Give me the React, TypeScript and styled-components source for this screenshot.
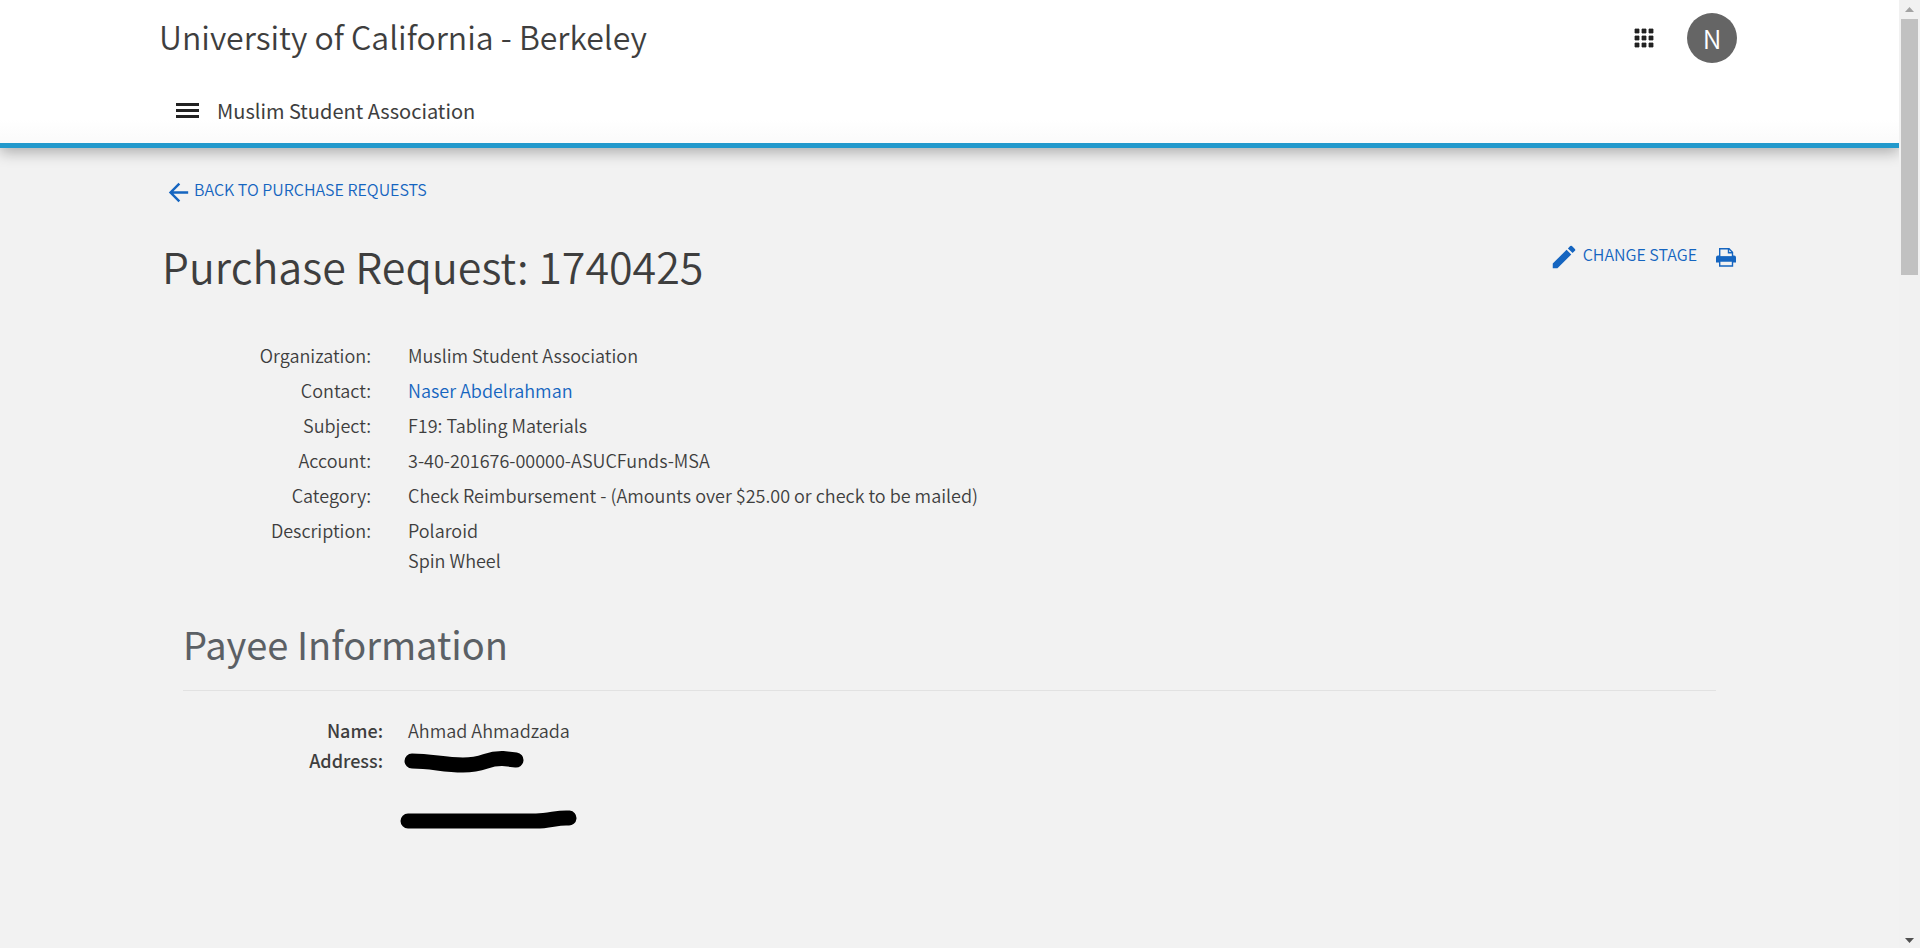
import React from "react";
import styled, { createGlobalStyle } from "styled-components";

const GlobalStyle = createGlobalStyle`
  *, *::before, *::after { box-sizing: border-box; }
  body {
    margin: 0;
    background: #f2f2f2;
    color: #3e3e3e;
    font-family: "Noto Sans CJK SC", "Open Sans", sans-serif;
    font-size: 18px;
    font-weight: 350;
    line-height: 30px;
  }
  a { color: #1565c0; text-decoration: none; }
`;

const Shell = styled.div`
  display: grid;
  grid-template-columns: minmax(0, 1fr) 21px;
  min-height: 100vh;
`;

const Page = styled.div`
  overflow: hidden;
`;

const Header = styled.header`
  padding: 13px 159px 12px;
  background: linear-gradient(#fff 120px, #fafafa 143px);
  border-bottom: 5px solid #2299cc;
  box-shadow: 0 4px 14px rgba(0, 0, 0, 0.3);
`;

const Brand = styled.div`
  display: flex;
  justify-content: space-between;
  height: 50px;
  padding-right: 3px;
`;

const School = styled.div`
  font-size: 32px;
  line-height: 46px;
`;

const Tools = styled.div`
  display: flex;
  align-items: center;
  gap: 28px;
`;

const IconButton = styled.button`
  display: flex;
  padding: 0;
  border: 0;
  background: none;
  color: #222;
  cursor: pointer;
`;

const Avatar = styled.button`
  width: 50px;
  height: 50px;
  padding: 0;
  border: 0;
  border-radius: 50%;
  background: #656565;
  color: #fff;
  font: inherit;
  font-size: 26px;
  line-height: 48px;
`;

const OrgBar = styled.nav`
  display: flex;
  align-items: center;
  gap: 14px;
  height: 40px;
  margin-top: 28px;
  padding-left: 14px;
`;

const OrgName = styled.div`
  font-size: 20px;
  font-weight: 400;
`;

const Main = styled.main`
  padding: 26px 162px 40px;
`;

const ActionLink = styled.a<{ $gap: number }>`
  display: inline-flex;
  align-items: center;
  gap: ${(p) => p.$gap}px;
  font-size: 16px;
  line-height: 30px;
  text-transform: uppercase;

  svg { margin: 3px 0 -3px; }
`;

const BackRow = styled.div`
  display: flex;
  padding-left: 2px;
`;

const TitleRow = styled.div`
  display: flex;
  justify-content: space-between;
  margin-top: 31px;
`;

const Title = styled.h1`
  margin: 0;
  font-size: 43px;
  font-weight: 350;
  line-height: 60px;
`;

const Actions = styled.div`
  display: flex;
  align-items: center;
  gap: 18px;
  height: 38px;
`;

const Details = styled.dl`
  display: grid;
  grid-template-columns: 209px minmax(0, 1fr);
  gap: 5px 37px;
  margin: 45px 0 0;
`;

const Term = styled.dt`
  text-align: right;
`;

const Value = styled.dd`
  margin: 0;
`;

const Payee = styled.section`
  margin: 43px 21px 0;
`;

const SectionTitle = styled.h2`
  margin: 0;
  padding-bottom: 20px;
  border-bottom: 1px solid #e2e2e2;
  color: #5b6065;
  font-size: 38px;
  font-weight: 400;
  line-height: 52px;
`;

const PayeeDetails = styled.dl`
  display: grid;
  grid-template-columns: 200px minmax(0, 1fr);
  column-gap: 25px;
  margin: 24px 0 0;
`;

const StrongTerm = styled(Term)`
  font-weight: 500;
`;

const Redaction = styled.svg`
  display: block;
  height: 90px;
  width: 190px;
  margin-left: -10px;
`;

const Scrollbar = styled.div`
  display: flex;
  flex-direction: column;
  align-items: center;
  height: 100vh;
  padding: 7px 0 5px;
  background: #f1f1f1;
`;

const Thumb = styled.div`
  width: 17px;
  height: 256px;
  margin: 7px 0 auto;
  background: #c1c1c1;
`;

const details: { term: string; value: React.ReactNode }[] = [
  { term: "Organization:", value: "Muslim Student Association" },
  { term: "Contact:", value: <a href="#contact">Naser Abdelrahman</a> },
  { term: "Subject:", value: "F19: Tabling Materials" },
  { term: "Account:", value: "3-40-201676-00000-ASUCFunds-MSA" },
  { term: "Category:", value: "Check Reimbursement - (Amounts over $25.00 or check to be mailed)" },
  { term: "Description:", value: <>Polaroid<br />Spin Wheel</> },
];

export default function App() {
  return (
    <>
      <GlobalStyle />
      <Shell>
        <Page>
          <Header>
            <Brand>
              <School>University of California - Berkeley</School>
              <Tools>
                <IconButton aria-label="Apps">
                  <svg width="30" height="30" viewBox="0 0 30 30" fill="currentColor">
                    <path d="M6 6h4v4H6zM13 6h4v4h-4zM20 6h4v4h-4zM6 13h4v4H6zM13 13h4v4h-4zM20 13h4v4h-4zM6 20h4v4H6zM13 20h4v4h-4zM20 20h4v4h-4z" stroke="currentColor" strokeWidth="0.800" />
                  </svg>
                </IconButton>
                <Avatar>N</Avatar>
              </Tools>
            </Brand>
            <OrgBar>
              <IconButton aria-label="Menu">
                <svg width="30" height="30" viewBox="0 0 30 30" fill="currentColor">
                  <path d="M3 7h23v3H3zM3 13h23v3H3zM3 19h23v3H3z" />
                </svg>
              </IconButton>
              <OrgName>Muslim Student Association</OrgName>
            </OrgBar>
          </Header>
          <Main>
            <BackRow>
              <ActionLink href="#requests" $gap={1}>
                <svg width="29" height="29" viewBox="0 0 24 24" fill="currentColor">
                  <path d="M20 11H7.83l5.59-5.59L12 4l-8 8 8 8 1.41-1.41L7.83 13H20v-2z" />
                </svg>
                Back to Purchase Requests
              </ActionLink>
            </BackRow>
            <TitleRow>
              <Title>Purchase Request: 1740425</Title>
              <Actions>
                <ActionLink href="#stage" $gap={4}>
                  <svg width="30" height="30" viewBox="0 0 24 24" fill="currentColor">
                    <path d="M3 17.25V21h3.75L17.81 9.94l-3.75-3.75L3 17.25zM20.71 7.04a1 1 0 0 0 0-1.41l-2.34-2.34a1 1 0 0 0-1.41 0l-1.83 1.83 3.75 3.75 1.83-1.83z" />
                  </svg>
                  Change Stage
                </ActionLink>
                <ActionLink href="#print" $gap={0} aria-label="Print">
                  <svg width="22" height="20" viewBox="0 0 22 20" fill="none">
                    <path d="M3 8.500h16a2 2 0 0 1 2 2v5H1v-5a2 2 0 0 1 2-2z" fill="#1565c0" />
                    <path d="M4.700 10V1.700h9.300l3.500 3.500V10z" fill="#f2f2f2" stroke="#1565c0" strokeWidth="1.400" />
                    <path d="M13.500 1.700v4h4" stroke="#1565c0" strokeWidth="1.400" />
                    <path d="M4 9.500h14v3H4z" fill="#1565c0" />
                    <path d="M4.700 14h12.800v5H4.700z" fill="#f2f2f2" stroke="#1565c0" strokeWidth="1.400" />
                  </svg>
                </ActionLink>
              </Actions>
            </TitleRow>
            <Details>
              {details.map((d) => (
                <React.Fragment key={d.term}>
                  <Term>{d.term}</Term>
                  <Value>{d.value}</Value>
                </React.Fragment>
              ))}
            </Details>
            <Payee>
              <SectionTitle>Payee Information</SectionTitle>
              <PayeeDetails>
                <StrongTerm>Name:</StrongTerm>
                <Value>Ahmad Ahmadzada</Value>
                <StrongTerm>Address:</StrongTerm>
                <Value>
                  <Redaction viewBox="0 0 190 90" fill="none" stroke="#000" strokeWidth="15" strokeLinecap="round" role="img" aria-label="Redacted address">
                    <path d="M14 16C34 16 45 20 65 20C88 20 87 13 105 13.500L118 15" />
                    <path d="M10 76H138C152 76 160 72 171 73" />
                  </Redaction>
                </Value>
              </PayeeDetails>
            </Payee>
          </Main>
        </Page>
        <Scrollbar aria-hidden="true">
          <svg width="9" height="5" viewBox="0 0 9 5"><path d="M0 5L4.500 0L9 5z" fill="#a3a3a3" /></svg>
          <Thumb />
          <svg width="9" height="5" viewBox="0 0 9 5"><path d="M0 0h9L4.500 5z" fill="#505050" /></svg>
        </Scrollbar>
      </Shell>
    </>
  );
}
